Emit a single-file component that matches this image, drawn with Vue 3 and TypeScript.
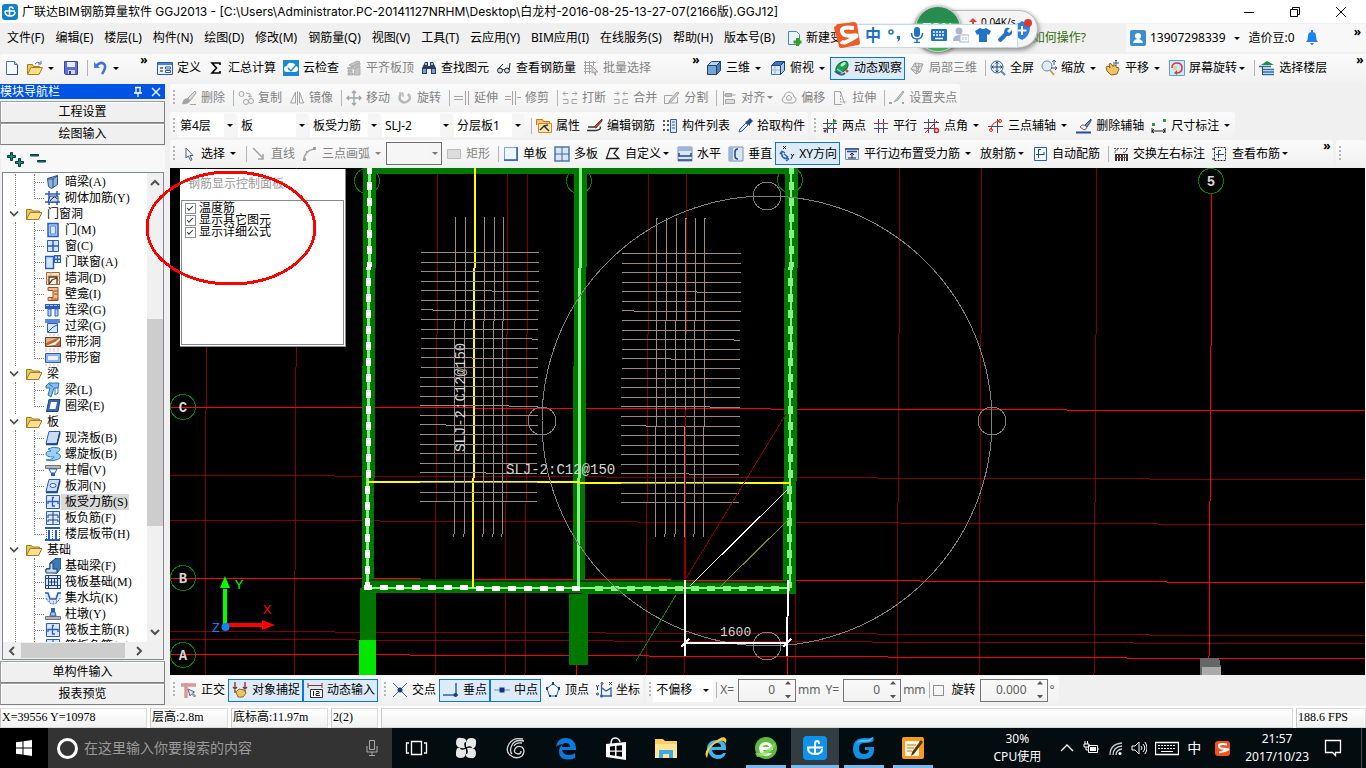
<script setup lang="ts">
import { h, ref } from 'vue'

interface Item {
  kind?: 'sep' | 'handle' | 'combo' | 'more' | 'space'
  icon?: string
  label?: string
  off?: boolean
  on?: boolean
  arrow?: 'split' | 'menu'
  size?: string
}

const g = '#a3a3a3'
const b = '#2b5fb4'

const icons: Record<string, string> = {
  new: `<path d="M2.500 1.500h8l3 3v10h-11z" fill="#f6faff" stroke="#50719f"/><path d="M10.500 1.500v3h3" fill="#c9daf0" stroke="#50719f"/><path d="M13.500 5v9.500h-10" fill="none" stroke="#2f4d7c"/>`,
  open: `<path d="M0.500 14V4.500h5l1 2h6V8" fill="#f0c75a" stroke="#a77f22"/><path d="M0.500 14.500L4 7.500h11.500l-3.500 7z" fill="#ffdf85" stroke="#a77f22"/><path d="M8 4q2-3 5-1m1-2v3h-3" fill="none" stroke="#4e6f8c"/>`,
  save: `<path d="M1.500 1.500h13v13h-12l-1-1z" fill="#5c6fd8" stroke="#37459b"/><path d="M4 2h8v5H4z" fill="#e9eeff"/><path d="M5 10h7v4H5z" fill="#cfd6ee"/><path d="M6 11h2v3H6z" fill="#333f86"/>`,
  undo: `<path d="M2 2v6h6z" fill="#3e86dd"/><path d="M4 6q5-5 8-2t-2 10" fill="none" stroke="#3e74d0" stroke-width="2.500"/>`,
  define: `<path d="M0.500 2.500h15v12H0.500z" fill="#eaf3ff" stroke="#2a5aa8"/><path d="M1 3h14v2H1z" fill="#4b83d6"/><path d="M3 8h3M3 11h3" stroke="#111"/><path d="M8.500 7h5v2h-5zM8.500 10.500h5v2h-5z" fill="#fff" stroke="#2a5aa8"/>`,
  sum: `<path d="M12 5V3H4l4.500 5L4 13h8v-2" fill="none" stroke="#000" stroke-width="1.600"/>`,
  cloud: `<path d="M0 0h16v16H0z" fill="#1b8ad6"/><path d="M4 12q-3 0-3-3t3-3q1-4 5-3t3 3q3 0 3 3t-3 3z" fill="#fff"/><path d="M5 8l3 3 5-6" stroke="#1b8ad6" stroke-width="1.500" fill="none"/>`,
  flat: `<path d="M3 5l8-4 3 1-8 5zM1 8l5-1 8-4v2l-6 4H2zM2 10h4v2H2zM2 13h5v2H2zM9 9l5-3v9H8z" fill="#c4c4c4" stroke="${g}" stroke-width=".8"/>`,
  binoc: `<path d="M1 8l3-6h3v4h2V2h3l3 6v6h-5V9H6v5H1z" fill="#2c3f62"/><path d="M2 9h3v4H2zM11 9h3v4h-3z" fill="#7c9fd6"/><path d="M4 3h2v2H4zM10 3h2v2h-2z" fill="#9db8e2"/>`,
  glasses: `<circle cx="4" cy="10.500" r="2.500" fill="#cdd8e4" stroke="#222"/><circle cx="11" cy="10.500" r="2.500" fill="#cdd8e4" stroke="#222"/><path d="M6 10q1.500-1 3 0M2 9l5-5M13 10l1-7" fill="none" stroke="#222"/>`,
  batch: `<path d="M1 2.500h12M1 5.500h8M1 8.500h7M1 11.500h7M2.500 1v13M6.500 1v13M10.500 1v5" stroke="${g}" fill="none"/><path d="M9 6l6 6h-3l1 3h-1l-1-3-2 1z" fill="#ddd" stroke="${g}"/>`,
  cube: `<path d="M1.500 5.500h9v9h-9z" fill="#77a5d9" stroke="#24466e"/><path d="M1.500 5.500l4-4h9l-4 4z" fill="#b7d4f2" stroke="#24466e"/><path d="M10.500 5.500l4-4v9l-4 4z" fill="#4b7cb6" stroke="#24466e"/>`,
  top: `<path d="M1.500 5.500h9v9h-9z" fill="#dbe9f8" stroke="#55749b"/><path d="M1.500 5.500l4-4h9l-4 4z" fill="#3878c4" stroke="#24466e"/><path d="M10.500 5.500l4-4v9l-4 4z" fill="#abc8e8" stroke="#24466e"/><path d="M5 6v8M2 10h8" stroke="#9db8d6"/>`,
  orbit: `<path d="M1 11q6 6 10 2" fill="none" stroke="#3f5f8d" stroke-width="2"/><ellipse cx="8" cy="7" rx="7" ry="4.500" transform="rotate(-40 8 7)" fill="#22a04e" stroke="#13683a"/><ellipse cx="9.500" cy="4.500" rx="3" ry="1.500" transform="rotate(-35 9 5)" fill="#b8f5c4"/><path d="M3 9l6 4" stroke="#7ad6f0" stroke-width="1.500"/><circle cx="13" cy="11" r="1.500" fill="#d2403b"/>`,
  local3d: `<path d="M2 9l4-6 8 1-3 8zM2 9l5 5 4-2M6 3l2 6-1 5M8 9l6-5" fill="#e3e3e3" stroke="${g}"/><path d="M4 6l7 1M10 3.500l-1 8" fill="none" stroke="${g}"/>`,
  full: `<circle cx="7" cy="7" r="6" fill="#e1efff" stroke="#385d94"/><path d="M7 2v10M2 7h10M5.500 3.500L7 2l1.500 1.500M5.500 10.500L7 12l1.500-1.500M3.500 5.500L2 7l1.500 1.500M10.500 5.500L12 7l-1.500 1.500" fill="none" stroke="#204277"/><path d="M11 11l4 4" stroke="#70819c" stroke-width="2"/>`,
  zoom: `<circle cx="6" cy="6" r="5" fill="#dceeff" stroke="#6f8aa9"/><path d="M9 10l4 5" stroke="#d39a4a" stroke-width="2"/><path d="M13 0v5m-2-3l2-2 2 2M10 8h6m-2-1.500L16 8l-2 2" fill="none" stroke="#2f5b94"/>`,
  pan: `<path d="M1 7l2-1 2 2-1-4 2-.5 2 3V5l2 0 2 3 1-1 1 2-2 5-6 1-4-4z" fill="#f0c363" stroke="#8c6422"/><path d="M11 0v6M8 3h6M10 1l1-1 1 1" stroke="#345d91" fill="none"/>`,
  rotscr: `<path d="M0.500 0.500h15v15H0.500z" fill="#cfe9fb" stroke="#5ba3d6"/><path d="M3 8q0-5 5-5t5 5-6 5" fill="none" stroke="#d63c3c" stroke-width="1.600"/><path d="M8 10l-3 3 3 2z" fill="#d63c3c"/><circle cx="6" cy="8" r="2" fill="#f4cd62"/>`,
  floors: `<path d="M2 5l6-4 7 4z" fill="#1e8a4c"/><path d="M0 6.500h12M4 9.500h11M4 12h11M4 14.500h11" stroke="#2a6ba8" stroke-width="1.400"/><path d="M3.500 6v9" fill="none" stroke="#205a36"/>`,
  del: `<path d="M14 1L7 8l2 3 6-8z" fill="#ddd" stroke="${g}"/><path d="M7 8q-5 0-6 6 6 1 8-3z" fill="${g}"/><path d="M9 14.500h6" stroke="${g}"/>`,
  copy: `<circle cx="3.500" cy="4" r="2.500" fill="none" stroke="${g}"/><circle cx="8" cy="12" r="2.500" fill="none" stroke="${g}"/><circle cx="13" cy="11" r="2.500" fill="none" stroke="${g}"/><path d="M8 3l4 1v3m-2-1l2 1 2-1" fill="none" stroke="${g}"/>`,
  mirror: `<path d="M6.500 2v11H1.500zM10.500 2v11h4z" fill="none" stroke="${g}"/><path d="M8.500 1v14" stroke="${g}"/>`,
  move: `<path d="M8 1v14M1 8h14M6 3l2-2 2 2M6 13l2 2 2-2M3 6L1 8l2 2M13 6l2 2-2 2" fill="none" stroke="${g}" stroke-width="1.400"/>`,
  rotate: `<path d="M4 4q-3 4 0 7t7 0 0-7" fill="none" stroke="#b8b8b8" stroke-width="2.500"/><path d="M2 3h4v4" fill="none" stroke="${g}"/>`,
  extend: `<path d="M0 6.500h9M0 9.500h9M11.500 1v14M14.500 1v14" stroke="${g}"/>`,
  trim: `<path d="M0 6.500h6M0 9.500h6M7.500 1v14M10.500 1v14M12 7.500h4" stroke="${g}"/>`,
  brk: `<path d="M1 3.500h5m-3-2L1 3.500l2 2M10 3.500h5m-2-2l2 2-2 2" fill="none" stroke="${g}"/><path d="M1 9.500h5v4H1M15 9.500h-5v4h5" fill="none" stroke="${g}"/>`,
  join: `<path d="M1 3.500h5m-2-2l2 2-2 2M15 3.500h-5m2-2l-2 2 2 2" fill="none" stroke="${g}"/><path d="M1 9.500h5v4H1M15 9.500h-5v4h5" fill="none" stroke="${g}"/>`,
  split: `<path d="M0.500 13V5.500h8M13.500 7v6H6M0 13.500h4" fill="none" stroke="${g}"/><path d="M13 2l2 1-7 8-4 3 2-4z" fill="#ccc" stroke="${g}"/>`,
  align: `<path d="M2.500 1v14M4.500 3.500h6v3h-6zM4.500 9.500h9v4h-9z" fill="#ddd" stroke="${g}"/><path d="M2.500 5h12" stroke="${g}"/>`,
  offset: `<path d="M4 13q-3-1-3-4 1-2 2-2 1-5 5-5t5 5q3 1 2 3-1 3-3 3z" fill="none" stroke="${g}"/><path d="M6 10q-2-3 2-5 4 2 2 5z" fill="none" stroke="${g}"/>`,
  stretch: `<path d="M10 14.500H2.500v-13h6l4 12" fill="none" stroke="${g}"/><path d="M8.500 2v10h6" fill="none" stroke="${g}" stroke-dasharray="2 1"/>`,
  grip: `<path d="M0 13h3M13 13h2" stroke="${g}" stroke-width="2"/><path d="M14 1L5 12l4-2 6-8z" fill="#ccc" stroke="${g}"/>`,
  prop: `<path d="M0.500 7V1.500h6l1 2h6v3" fill="#f7c668" stroke="#b77a20"/><path d="M2.500 5.500h13v9h-13z" fill="#ffe7b0" stroke="#d08b28"/><path d="M4 12l4-4 5 5M8 8l4-1" fill="none" stroke="#333" stroke-width="1.500"/>`,
  edit: `<path d="M15 1L7 9l2 1 6-7z" fill="#c34a38" stroke="#6a2c22"/><path d="M1 9h6M0 12.500h9q6-1 4-4" fill="none" stroke="#333" stroke-width="1.300"/>`,
  list: `<path d="M8.500 1.500h6v13h-6z" fill="#dcebff" stroke="#335c9b"/><path d="M10 4h3M10 7h3M10 10h3" stroke="#335c9b"/><path d="M1 3h2M5 3h2M1 7h2M5 7h2M1 12h2M5 12h2" stroke="#222" stroke-width="1.500"/>`,
  pick: `<path d="M2 14l1-3 6-6 2 2-6 6z" fill="#dcecff" stroke="#31599a"/><path d="M8 4l2-1 3-3 3 3-3 3 0 2z" fill="#244a90"/>`,
  twopt: `<path d="M5.500 1v14M11.500 1v14M1 5.500h14M1 10.500h14" stroke="#3d4a66"/><path d="M2 14L14 2" stroke="#2d9a3a"/><circle cx="3" cy="13" r="1.500" fill="#b32020"/><circle cx="13" cy="3" r="1.500" fill="#2d9a3a"/>`,
  para: `<path d="M5.500 1v14M10.500 1v14" stroke="#3d4a66"/><path d="M1 10.500h14" stroke="#5a3d80"/><path d="M1 5.500h14" stroke="#b03a3a"/>`,
  ptang: `<path d="M4.500 1v14M10.500 1v14M0 4.500h15M0 10.500h12" stroke="#3d4a80"/><path d="M1 15L13 3" stroke="#d22"/><circle cx="12.500" cy="12.500" r="2" fill="none" stroke="#d22" stroke-width="1.500"/>`,
  threept: `<path d="M9.500 1v14M0 8.500h15" stroke="#3d4a66"/><path d="M3 12q0-8 9-9" fill="none" stroke="#d22"/><circle cx="3" cy="12" r="1.500" fill="none" stroke="#d22"/><circle cx="12" cy="3" r="1.500" fill="none" stroke="#d22"/>`,
  delax: `<path d="M15 1L9 7l2 2 4-6z" fill="#6d8fce" stroke="#2b4a86"/><path d="M8 7q-2-1-4 2l4 3q3-1 3-3z" fill="#f2f0ee" stroke="#84584a"/><path d="M0 14.500h15" stroke="#2849a4" stroke-width="2"/>`,
  dim: `<path d="M1 13h13M1 10v5M14 10v5M3 11l-2 2 2 2M12 11l2 2-2 2" fill="none" stroke="#222"/><path d="M1 5h3v3H1zM12 1h3v3h-3z" fill="#2d9a4a"/>`,
  cursor: `<path d="M5 2v10l2.500-2 2 4.500 1.500-.6-2-4.400h3z" fill="#fff" stroke="#4d5b78"/>`,
  line: `<path d="M2 2l10 10M12 8v5H7" fill="none" stroke="${g}" stroke-width="1.500"/>`,
  arc: `<path d="M2 14q0-9 10-11" fill="none" stroke="${g}" stroke-width="1.500"/><path d="M11 1h3v3h-3zM1 12h3v3H1zM4 5h2v2H4z" fill="${g}"/>`,
  rect: `<path d="M1.500 3.500h13v9h-13z" fill="#ddd" stroke="#bbb"/>`,
  single: `<path d="M1.500 1.500h13v13h-13z" fill="#eff6ff" stroke="#79a3d9"/><path d="M1 14h14M14 1v13" stroke="#2a5cae" stroke-width="1.500"/>`,
  multi: `<path d="M1 1h14v14H1z" fill="#d8e6f6" stroke="#4b76ab" stroke-width="1.500"/><path d="M8 1v14M1 8h14" stroke="#3e6aa1"/>`,
  custom: `<path d="M1.500 12.500L5 2.500h8l-4 5 5 5z" fill="#fff" stroke="#222" stroke-width="1.300"/>`,
  hori: `<path d="M1 1h14v14H1z" fill="#d9e6f5" stroke="#7796bd"/><path d="M1 1h14v4H1z" fill="#9bb5d6"/><path d="M2 7v3h12V7M1 14h14" fill="none" stroke="#25467e" stroke-width="1.500"/>`,
  vert: `<path d="M1 1h14v14H1z" fill="#d9e6f5" stroke="#7796bd"/><path d="M1 1h4v14H1z" fill="#9bb5d6"/><path d="M10 3q-3 0-3 3v4q0 3 3 3" fill="none" stroke="#25467e" stroke-width="1.500"/>`,
  xy: `<path d="M3 5q-2 8 7 8M3 5l-2 3M3 5l3 2M10 13l-3-2M10 13l-3 2M5 8l4 3" fill="none" stroke="#2c66b5" stroke-width="1.500"/><path d="M4 0l3 3M7 0L4 3M12 8l1.500 2L15 8M13.500 10l-1.500 3" fill="none" stroke="#111"/>`,
  paredge: `<path d="M1.500 2.500h13v11h-13z" fill="#dfe9f7" stroke="#7090bd"/><path d="M1 3h14M3 5.500h10" stroke="#2a4b8c" stroke-width="1.500"/><path d="M8 7v5M6 9l2-2 2 2M4 12h8" fill="none" stroke="#222"/>`,
  auto: `<path d="M2.500 1.500h12v13h-12z" fill="#f4f8ff" stroke="${b}"/><path d="M9 3.500H6.500V12M4 8.500h8M12 6v3" fill="none" stroke="#26478c"/>`,
  swap: `<path d="M1 2.500h14" stroke="#666" stroke-dasharray="2 1"/><path d="M2 7q0-4 3-3M10 6q2 2 4-3" fill="none" stroke="#666"/><path d="M2 8h13v7H2z" fill="#333"/><path d="M4.500 9v6M7.500 9v6M10.500 9v6M12.500 9v6" stroke="#fff"/><path d="M3 11.500h11" stroke="#a33"/>`,
  viewbar: `<path d="M2.500 1.500h11v13h-11z" fill="none" stroke="#222" stroke-dasharray="2 1"/><path d="M9 4.500H6.500V12M4 8.500h8" fill="none" stroke="#26478c"/><path d="M0 3h3M0 13h3" stroke="#222"/>`,
  ortho: `<path d="M0 3h15M5 1v15" stroke="#d99a9a" stroke-width="3.500"/><path d="M7 7l2 7 1.500-2 3 3 1-1-3-3 2-1z" fill="#dbe4ee" stroke="#5a6b80"/>`,
  snap: `<path d="M3 0v11M13 0v11M1 5l2 2 2-2M11 5l2 2 2-2" fill="none" stroke="#8c3434" stroke-width="1.400"/><path d="M4 10l3-3 5 1 2 3-3 4H6z" fill="#eac761" stroke="#8f6b26"/>`,
  dynin: `<path d="M1 1v5M15 1v5M1 3.500h14" stroke="#8c3434"/><path d="M3.500 7.500h12v8h-12z" fill="#fff" stroke="#333"/><path d="M6.500 9v5M9 9.500h3v2H9v2h4" fill="none" stroke="#222"/>`,
  cross: `<path d="M1 1l14 14M15 1L1 15" stroke="#2a63b0"/><circle cx="8" cy="8" r="2.500" fill="#15417f"/>`,
  perp: `<path d="M13 1v12M0 13h15" stroke="#2a63b0" stroke-width="1.500"/><circle cx="12.500" cy="13" r="2" fill="#15417f"/>`,
  mid: `<path d="M0 8h16" stroke="#5f8dca"/><path d="M5.500 5.500h5v5h-5z" fill="#15317f"/>`,
  vertex: `<path d="M8 1.500l6 5-2.500 7.500h-7L2 6.500z" fill="#f4f8ff" stroke="#2a63b0"/><path d="M7 0h2v3H7zM1 5h2v3H1zM13 5h2v3h-2zM4 13h2v2H4zM10 13h2v2h-2z" fill="#15417f"/>`,
  coord: `<path d="M5.500 3v11H16M6 6l4 3 5-3v8" fill="none" stroke="#2a63b0" stroke-width="1.300"/><circle cx="5.500" cy="14" r="1.500" fill="#2a63b0"/><path d="M0 3l1.500 2L3 3M1.500 5v3M13 0l3 3M16 0l-3 3" fill="none" stroke="#333"/><circle cx="6" cy="1.500" r="1" fill="none" stroke="#333"/><circle cx="1.500" cy="12" r="1" fill="none" stroke="#333"/>`,
  doc: `<path d="M2.500 1.500h8l3 3v10h-11z" fill="#eaf5ff" stroke="#4886bd"/><path d="M11.500 8v8M7.500 12h8" stroke="#34a01e" stroke-width="3"/>`,
  user: `<path d="M0 2q0-2 2-2h12q2 0 2 2v12q0 2-2 2H2q-2 0-2-2z" fill="#3b8ecf"/><circle cx="8" cy="6" r="3" fill="#fff"/><path d="M3 13q1-4 5-4t5 4z" fill="#fff"/>`,
  bell: `<path d="M2 12q2-2 2-6 0-4 4-4t4 4q0 4 2 6z" fill="#1d83f0"/><path d="M6 13h4l-2 2.500zM7 0h2v3H7z" fill="#1d83f0"/>`,
  folder: `<path d="M0.500 13.500V3.500h5l1 1.500h7v3" fill="#efc458" stroke="#9d7a2a"/><path d="M0.500 13.500L4 6.500h12l-3.500 7z" fill="#ffe08c" stroke="#9d7a2a"/>`,
  beamA: `<path d="M2.500 4.500l10-3v9l-6 4-3-2z" fill="#8fb2de" stroke="#2a4d82"/><path d="M3 5h5v9M8 5l4-3" fill="none" stroke="#2a4d82"/>`,
  mesh: `<path d="M0 4h15M0 12h15M4 1v14M12 1v14" stroke="#2a5cc0" stroke-width="1.500"/><path d="M5 6h8v6H3z" fill="#c5dafa" stroke="#1e3f80"/><path d="M5 11q5-7 7-2" fill="none" stroke="#222"/>`,
  door: `<path d="M3 1.500h10v13H3z" fill="#a9caff" stroke="#2a5cc0" stroke-width="1.500"/><path d="M5.500 4h5v8h-5z" fill="#d8e8ff" stroke="#5d8bdc"/>`,
  window: `<path d="M2.500 2.500h11v11h-11z" fill="#d3e5ff" stroke="#2a5cc0"/><path d="M8 2v12M2 8h12" stroke="#2a5cc0" stroke-width="1.500"/>`,
  doorwin: `<path d="M0.500 2.500h8v12h-8z" fill="#d3e5ff" stroke="#2a5cc0" stroke-width="1.500"/><path d="M9 1h7v8H9z" fill="#2a5cc0"/><path d="M10 2.500h2v2h-2zM13 2.500h2v2h-2zM10 6h2v2h-2zM13 6h2v2h-2z" fill="#d3e5ff"/>`,
  wallhole: `<path d="M1.500 2.500h13v12h-13z" fill="#ffe4ce" stroke="#b3612c"/><path d="M1 6h14M1 10h14M6 2v4M11 6v4" stroke="#d99870"/><path d="M4 14V7h8v7M4 14l3-4 5-2" fill="#fff" stroke="#5a3216" stroke-width="1.300"/>`,
  niche: `<path d="M3 1.500h10v13H3v-3h5v-7H3z" fill="#f6bb8e" stroke="#9e4f1c"/><path d="M9 5h4M9 8h4M6 13h7" stroke="#9e4f1c"/>`,
  link: `<path d="M0 2h15v5H0z" fill="#2a5cc0"/><path d="M1 3.500h13" stroke="#a9c8f6" stroke-dasharray="3 1"/><path d="M3 7h3v7H3zM10 7h3v7h-3z" fill="#b9d3fa" stroke="#2a5cc0"/>`,
  lintel: `<path d="M0 1h15v4H0z" fill="#5a8ae0"/><path d="M2.500 5.500h10v9h-10z" fill="#d7e7ff" stroke="#2a5cc0"/><path d="M3 14l5-5 4-2" fill="none" stroke="#2a5cc0"/>`,
  striphole: `<path d="M0.500 3.500h15v9H0.500z" fill="#b56a3c" stroke="#7b3c18"/><path d="M1 12L10 8l5-4v2l-5 5z" fill="#fff0e4"/><path d="M1 4h11L1 9z" fill="#e5b392"/><path d="M0 1h16M0 15h16" stroke="#f0b0a0" stroke-dasharray="2 2"/>`,
  stripwin: `<path d="M0.500 3.500h15v9H0.500z" fill="#8db4f0" stroke="#2a5cc0"/><path d="M3 6h10v4H3z" fill="#e8f2ff"/><path d="M0 1h16M0 15h16" stroke="#f0b0a0" stroke-dasharray="2 2"/>`,
  beamL: `<path d="M1 4l3-3h10l-1 5H9l-3 9-3-2 2-7H1z" fill="#86bdee" stroke="#2474b8"/><path d="M10 6v7l3-2V5M4 2l4 3" fill="none" stroke="#2474b8"/>`,
  ring: `<path d="M4 1.500h11L13 13.500H1.500z" fill="#3869b8" stroke="#1e417f"/><path d="M6 4h6l-1.500 7h-6z" fill="#fff"/>`,
  slab: `<path d="M4 1.500h11l-3 12H1z" fill="#c9dcf8" stroke="#2a5cc0"/><path d="M1 14.500h11l3-12" fill="none" stroke="#1e417f" stroke-width="1.500"/>`,
  spiral: `<path d="M3 3q5-3 11-1 3 2-3 5 6 1 4 5-5 4-14 2 8-1 8-3-8 0-8-3t5-3q-2-2-3-2z" fill="#9bd0f6" stroke="#2c7fc0"/>`,
  cap: `<path d="M0.500 3.500h15v3h-15z" fill="#b7b7b7" stroke="#777"/><path d="M4 7l2 4h4l2-4z" fill="#fff" stroke="#2a5cc0"/><path d="M6 11h4v3H6z" fill="#2a5cc0"/>`,
  slabhole: `<path d="M4 1.500h11l-3 12H1z" fill="#c9dcf8" stroke="#2a5cc0"/><path d="M1 14.500h11l3-12" fill="none" stroke="#1e417f" stroke-width="1.500"/><ellipse cx="8" cy="7.500" rx="3" ry="2" fill="#fff" stroke="#2a5cc0"/>`,
  rebar: `<path d="M1.500 1.500h13v13h-13z" fill="#dce9fd" stroke="#2a5cc0"/><path d="M9 3.500H7.500V12H10M3 10V7.500h10V10" fill="none" stroke="#2a5cc0" stroke-width="1.300"/>`,
  negbar: `<path d="M1.500 1.500h13v13h-13z" fill="#dce9fd" stroke="#2a5cc0"/><path d="M8 2v12M3 5h10M3 10h10M3 5v3M13 5v3M3 10v2M13 10v2" fill="none" stroke="#1e417f"/>`,
  strip: `<path d="M0 2h15M0 14h15" stroke="#2a5cc0" stroke-width="2"/><path d="M4 4v9M11 4v9" stroke="#2a5cc0" stroke-width="2"/><path d="M7.500 4v9M1.500 4v9M14.500 4v9" stroke="#2a5cc0" stroke-dasharray="1 1"/>`,
  fbeam: `<path d="M1 14v-3l4-1V5l6-5h5v10l-4 5z" fill="#3a78bd" stroke="#1e4273"/><path d="M1 11h4V5h3v6h4v4H1z" fill="#bfdcf8" stroke="#1e4273"/>`,
  raft: `<path d="M0.500 1.500h15v13H0.500z" fill="#dce9fd" stroke="#1e417f"/><path d="M3.500 1v14M12.500 1v14M0 4.500h16M0 11.500h16M6.500 4v8M9.500 4v8M3 8h10" stroke="#1e417f"/>`,
  pit: `<path d="M0 2h4l2 5h4l2-5h4v5q-3 8-8 7T0 7z" fill="#dce9fd"/><path d="M0 3h3l2 6h6l2-6h3" fill="none" stroke="#2a5cc0" stroke-width="1.500"/><path d="M1 8q3 6 7 6t7-6M4 11h1M8 12h1M11 11h1" fill="none" stroke="#2a5cc0" stroke-dasharray="2 1"/>`,
  pier: `<path d="M0.500 10.500h15v3h-15z" fill="#b7b7b7" stroke="#777"/><path d="M5 10l1-4h4l1 4z" fill="#9dc0f5" stroke="#2a5cc0"/><path d="M6 2h4v4H6z" fill="#2a5cc0"/>`,
}

const caret = () => h('svg', { class: 'caret', viewBox: '0 0 6 3' }, [h('path', { d: 'M0 0h6L3 3z', fill: 'currentColor' })])

const Strip = (props: { items: Item[] }) =>
  props.items.map((it) => {
    if (it.kind === 'sep') return h('i', { class: 't-sep' })
    if (it.kind === 'handle') return h('i', { class: 't-handle' })
    if (it.kind === 'space') return h('i', { class: 't-space' })
    if (it.kind === 'more') return h('button', { class: 't-more', 'aria-label': '更多' }, '»')
    if (it.kind === 'combo')
      return h('span', { class: ['t-combo', it.size, { framed: it.off }] }, [
        h('select', { 'aria-label': it.label || '数值', disabled: it.off }, [h('option', it.label)]),
        h('span', { class: 't-drop' }, [caret()]),
      ])
    return h('button', { class: ['t-btn', { off: it.off, on: it.on }] }, [
      it.icon ? h('svg', { class: 't-ico', viewBox: '0 0 16 16', innerHTML: icons[it.icon] }) : null,
      it.label ? h('span', { class: 't-label' }, it.label) : null,
      it.arrow ? h('span', { class: ['t-arrow', it.arrow] }, [caret()]) : null,
    ])
  })
Strip.props = ['items']

const sep: Item = { kind: 'sep' }
const handle: Item = { kind: 'handle' }
const more: Item = { kind: 'more' }
const space: Item = { kind: 'space' }
const it = (icon: string, label: string, rest: Partial<Item> = {}): Item => ({ icon, label, ...rest })
const off = (icon: string, label: string, rest: Partial<Item> = {}): Item => ({ icon, label, off: true, ...rest })

const menus = ['文件(F)', '编辑(E)', '楼层(L)', '构件(N)', '绘图(D)', '修改(M)', '钢筋量(Q)', '视图(V)', '工具(T)', '云应用(Y)', 'BIM应用(I)', '在线服务(S)', '帮助(H)', '版本号(B)']

const fileBar: Item[] = [it('new', ''), it('open', '', { arrow: 'split' }), it('save', ''), sep, it('undo', '', { arrow: 'split' }), space, more]
const calcBar: Item[] = [
  it('define', '定义'), it('sum', '汇总计算'), it('cloud', '云检查'), off('flat', '平齐板顶'), it('binoc', '查找图元'),
  it('glasses', '查看钢筋量'), off('batch', '批量选择'), space, more,
]
const viewBar: Item[] = [
  it('cube', '三维', { arrow: 'split' }), it('top', '俯视', { arrow: 'split' }), it('orbit', '动态观察', { on: true }), off('local3d', '局部三维'), sep,
  it('full', '全屏'), it('zoom', '缩放', { arrow: 'split' }), it('pan', '平移', { arrow: 'split' }), it('rotscr', '屏幕旋转', { arrow: 'menu' }), sep,
  it('floors', '选择楼层'), space, more,
]
const rows: Item[][][] = [
  [[
    handle, off('del', '删除'), sep, off('copy', '复制'), off('mirror', '镜像'), sep, off('move', '移动'), off('rotate', '旋转'), sep,
    off('extend', '延伸'), off('trim', '修剪'), sep, off('brk', '打断'), off('join', '合并'), off('split', '分割'), sep,
    off('align', '对齐', { arrow: 'menu' }), off('offset', '偏移'), off('stretch', '拉伸'), sep, off('grip', '设置夹点'),
  ]],
  [[
    handle, { kind: 'combo', label: '第4层', size: 'small' }, { kind: 'combo', label: '板' }, { kind: 'combo', label: '板受力筋' },
    { kind: 'combo', label: 'SLJ-2' }, { kind: 'combo', label: '分层板1' }, sep,
    it('prop', '属性'), it('edit', '编辑钢筋'), it('list', '构件列表'), it('pick', '拾取构件'),
  ], [
    handle, it('twopt', '两点'), it('para', '平行'), it('ptang', '点角', { arrow: 'split' }), it('threept', '三点辅轴', { arrow: 'split' }),
    it('delax', '删除辅轴'), it('dim', '尺寸标注', { arrow: 'split' }),
  ]],
  [[
    handle, it('cursor', '选择', { arrow: 'split' }), sep, off('line', '直线'), off('arc', '三点画弧', { arrow: 'split' }),
    { kind: 'combo', label: '', off: true, size: 'small' }, off('rect', '矩形'), sep, it('single', '单板'), it('multi', '多板'),
    it('custom', '自定义', { arrow: 'menu' }), it('hori', '水平'), it('vert', '垂直'), it('xy', 'XY方向', { on: true }),
    it('paredge', '平行边布置受力筋', { arrow: 'split' }), { label: '放射筋', arrow: 'menu' }, it('auto', '自动配筋'), sep,
    it('swap', '交换左右标注'), it('viewbar', '查看布筋', { arrow: 'menu' }), space, more,
  ], [handle, space]],
]
const snapBars: Item[][] = [
  [handle, it('ortho', '正交'), it('snap', '对象捕捉', { on: true }), it('dynin', '动态输入', { on: true })],
  [handle, it('cross', '交点'), it('perp', '垂点', { on: true }), it('mid', '中点', { on: true }), it('vertex', '顶点'), it('coord', '坐标')],
]

interface Node { icon: string; label: string; key?: string; sel?: boolean; last?: boolean }
const n = (icon: string, label: string, key?: string, rest: Partial<Node> = {}): Node => ({ icon, label, key, ...rest })
const tree: { label?: string; kids: Node[] }[] = [
  { kids: [n('beamA', '暗梁', 'A'), n('mesh', '砌体加筋', 'Y', { last: true })] },
  { label: '门窗洞', kids: [
    n('door', '门', 'M'), n('window', '窗', 'C'), n('doorwin', '门联窗', 'A'), n('wallhole', '墙洞', 'D'), n('niche', '壁龛', 'I'),
    n('link', '连梁', 'G'), n('lintel', '过梁', 'G'), n('striphole', '带形洞'), n('stripwin', '带形窗', undefined, { last: true }),
  ] },
  { label: '梁', kids: [n('beamL', '梁', 'L'), n('ring', '圈梁', 'E', { last: true })] },
  { label: '板', kids: [
    n('slab', '现浇板', 'B'), n('spiral', '螺旋板', 'B'), n('cap', '柱帽', 'V'), n('slabhole', '板洞', 'N'),
    n('rebar', '板受力筋', 'S', { sel: true }), n('negbar', '板负筋', 'F'), n('strip', '楼层板带', 'H', { last: true }),
  ] },
  { label: '基础', kids: [
    n('fbeam', '基础梁', 'F'), n('raft', '筏板基础', 'M'), n('pit', '集水坑', 'K'), n('pier', '柱墩', 'Y'), n('rebar', '筏板主筋', 'R'),
    n('negbar', '筏板负筋', 'X'),
  ] },
]

const options = ref([
  { label: '温度筋', checked: true },
  { label: '显示其它图元', checked: true },
  { label: '显示详细公式', checked: true },
])

const darkAxes = [
  [206.5, 168, 205.5, 675], [297, 168, 294.5, 675], [438, 168, 435, 675], [508, 168, 505, 675], [528, 168, 525, 675],
  [649, 168, 646, 675], [687, 168, 684, 675], [796, 590, 795, 675], [900, 168, 897, 675], [982, 168, 979, 675], [1097, 168, 1094, 675],
  [170, 475.4, 1365, 479.8], [170, 520.2, 1365, 524.8], [170, 631.4, 1365, 635.8], [170, 639.3, 1365, 643.9],
]
const redAxes = [
  [170, 407, 1365, 411], [170, 578, 1365, 582.8], [170, 654, 1365, 659], [1212, 194, 1209, 658], [787.5, 656, 787.5, 675], [576.5, 660, 576.5, 675],
]
const mats = [
  { x1: 421, x2: 539, y: 252.5, cols: [455.5, 465.5, 484.5, 494.5, 503.5] },
  { x1: 622, x2: 741, y: 253.5, cols: [657, 666.5, 676.5, 686, 695.5, 705] },
]
const matRows = Array.from({ length: 27 }, (_, i) => i * 9.58)
const bubbles = [
  { x: 183, y: 407, t: 'C' }, { x: 183, y: 578, t: 'B' }, { x: 183, y: 655, t: 'A' }, { x: 1211, y: 181, t: '5' },
  { x: 367, y: 181, t: '' }, { x: 579, y: 181, t: '' }, { x: 790, y: 180, t: '' },
]
const grips = [[767, 196], [767, 646], [542, 421], [992, 421]]
</script>

<template>
  <div class="app">
    <header class="title">
      <svg class="logo" viewBox="0 0 16 16"><rect width="16" height="16" rx="3" fill="#1281c9" /><path d="M11 5q0-2-2-2T7.500 5v7M3 7h10M3 7q0 5 5 5t5-4" fill="none" stroke="#fff" stroke-width="1.500" /></svg>
      <h1>广联达BIM钢筋算量软件 GGJ2013 - [C:\Users\Administrator.PC-20141127NRHM\Desktop\白龙村-2016-08-25-13-27-07(2166版).GGJ12]</h1>
      <div class="winbtns">
        <button aria-label="最小化"><svg viewBox="0 0 12 12"><path d="M1 6.500h10" stroke="#000" /></svg></button>
        <button aria-label="还原"><svg viewBox="0 0 12 12"><path d="M1.500 3.500h7v7h-7zM3.500 3.500v-2h7v7h-2" fill="none" stroke="#000" /></svg></button>
        <button aria-label="关闭"><svg viewBox="0 0 12 12"><path d="M1 1l10 10M11 1L1 11" stroke="#000" /></svg></button>
      </div>
    </header>

    <nav class="menu">
      <div class="menus">
        <button v-for="m in menus" :key="m">{{ m }}</button>
        <button class="newchg"><svg class="i16" viewBox="0 0 16 16" v-html="icons.doc" />新建变更</button>
      </div>
      <a class="help" href="#">如何操作?</a>
      <div class="account">
        <button class="acc"><svg class="i16" viewBox="0 0 16 16" v-html="icons.user" />13907298339<svg class="tri" viewBox="0 0 6 3"><path d="M0 0h6L3 3z" /></svg></button>
        <span>造价豆:0</span>
        <svg class="i16" viewBox="0 0 16 16" v-html="icons.bell" />
        <b class="chev">»</b>
      </div>
    </nav>

    <div class="toolrow first">
      <div class="group file"><Strip :items="fileBar" /></div>
      <div class="group calc"><Strip :items="calcBar" /></div>
      <div class="group view"><Strip :items="viewBar" /></div>
    </div>

    <main class="body">
      <aside class="side">
        <div class="sidehead">
          <span>模块导航栏</span>
          <svg viewBox="0 0 12 12"><path d="M3 1.500h6M4 1v6M8 1v6M2 7h8M6 7v4" fill="none" stroke="#fff" stroke-width="1.300" /></svg>
          <svg viewBox="0 0 12 12"><path d="M2 2l8 8M10 2l-8 8" stroke="#fff" stroke-width="1.200" /></svg>
        </div>
        <button class="tab">工程设置</button>
        <button class="tab">绘图输入</button>
        <div class="sidetools">
          <svg viewBox="0 0 42 20"><g fill="#0c8f8b" stroke="#063c3a"><path d="M3.500 2.500h2v3h3v2h-3v3h-2v-3h-3v-2h3zM11.500 8.500h2v3h3v2h-3v3h-2v-3h-3v-2h3z" /><path d="M23.500 4.500h8v1.500h-8zM30.500 10.500h8v1.500h-8z" /></g></svg>
        </div>
        <div class="treebox">
          <div class="treemain">
            <div class="tree">
              <div v-for="(grp, gi) in tree" :key="gi" class="branch">
                <div v-if="grp.label" class="row parent">
                  <svg class="fold" viewBox="0 0 12 12"><path d="M2 3.500l4 4 4-4" fill="none" stroke="#444" stroke-width="1.600" /></svg>
                  <svg class="i16" viewBox="0 0 16 16" v-html="icons.folder" />
                  <span>{{ grp.label }}</span>
                </div>
                <div class="kids">
                  <div v-for="k in grp.kids" :key="k.label" class="row kid" :class="{ last: k.last }">
                    <i class="stem" />
                    <svg class="i16" viewBox="0 0 16 16" v-html="icons[k.icon]" />
                    <span class="name" :class="{ sel: k.sel }">{{ k.label }}<kbd v-if="k.key">({{ k.key }})</kbd></span>
                  </div>
                </div>
              </div>
            </div>
            <div class="vbar">
              <svg viewBox="0 0 12 12"><path d="M2 8l4-4 4 4" /></svg>
              <div class="track"><i class="before" /><i class="thumb" /><i class="after" /></div>
              <svg viewBox="0 0 12 12"><path d="M2 4l4 4 4-4" /></svg>
            </div>
          </div>
          <div class="hbar">
            <svg viewBox="0 0 12 12"><path d="M8 2L4 6l4 4" /></svg>
            <i class="hthumb" />
            <svg viewBox="0 0 12 12"><path d="M4 2l4 4-4 4" /></svg>
          </div>
        </div>
        <button class="tab">单构件输入</button>
        <button class="tab">报表预览</button>
      </aside>

      <section class="work">
        <div v-for="(row, ri) in rows" :key="ri" class="toolrow">
          <div v-for="(grp, gi) in row" :key="gi" class="group" :class="{ fill: ri === 2 && gi === 0, blank: ri === 2 && gi === 1 }"><Strip :items="grp" /></div>
        </div>

        <div class="canvas">
          <svg class="drawing" viewBox="170 168 1195 507" preserveAspectRatio="xMinYMin slice">
            <g shape-rendering="crispEdges" fill="none">
              <line v-for="(a, i) in darkAxes" :key="'d' + i" :x1="a[0]" :y1="a[1]" :x2="a[2]" :y2="a[3]" stroke="#800000" />
              <line v-for="(a, i) in redAxes" :key="'r' + i" :x1="a[0]" :y1="a[1]" :x2="a[2]" :y2="a[3]" stroke="#f00" />
              <circle v-for="(c, i) in bubbles" :key="'b' + i" :cx="c.x" :cy="c.y" r="12.500" stroke="#008000" />
            </g>
            <g shape-rendering="crispEdges">
              <path d="M363 168h427v6H376v-1h-13z" fill="#007800" />
              <path d="M363 168h13l-2 420h-12z" fill="#007800" />
              <path d="M574 168h13l-2 415h-12z" fill="#007800" />
              <path d="M785 168h13l-2 421h-13z" fill="#007800" />
              <path d="M362 580l434 2v12l-434-1z" fill="#007800" />
              <path d="M368 579l422 2v2l-422-2z" fill="#004400" />
              <path d="M360 588h16v52h-16zM569 594h19v71h-19z" fill="#007800" />
              <path d="M359 640h17v35h-17z" fill="#00e600" />
            </g>
            <g shape-rendering="crispEdges" fill="none" stroke="#84f284">
              <path d="M369.500 168L367.500 588M580.500 168L578.500 588" stroke-width="3" />
              <path d="M791 168L790 588" stroke-width="2" />
              <path d="M368 587.500L790 588.500" stroke-width="2" />
              <path d="M791.500 166L789.500 588" stroke-width="5" stroke-dasharray="8 8" />
              <path d="M595 588.500H790" stroke-width="5" stroke-dasharray="8 8" />
              <path d="M369.500 166L367.500 588" stroke="#fff" stroke-width="5" stroke-dasharray="8 8" />
              <path d="M364 587.500L580 588.500" stroke="#fff" stroke-width="5" stroke-dasharray="8 8" />
            </g>
            <g shape-rendering="crispEdges" stroke="#ff0" stroke-width="2">
              <path d="M475 168L473 588M368 482L790 483" />
            </g>
            <g shape-rendering="crispEdges" stroke="#9a8a80">
              <template v-for="m in mats" :key="m.x1">
                <line v-for="(r, i) in matRows" :key="'h' + i" :x1="m.x1 - i / 26" :x2="m.x2 - i / 13" :y1="m.y + r" :y2="m.y + r + 0.3" />
                <line v-for="c in m.cols" :key="'v' + c" :x1="c" :x2="c - 1.5" :y1="m.y - 35" y2="537" />
              </template>
            </g>
            <path d="M685.500 410V580" stroke="#a00000" shape-rendering="crispEdges" />
            <g fill="none" shape-rendering="crispEdges">
              <circle cx="767" cy="421" r="225" stroke="#808080" />
              <circle v-for="(p, i) in grips" :key="i" :cx="p[0]" :cy="p[1]" r="14" stroke="#808080" />
              <path d="M685 580L786 414" stroke="#800000" />
              <path d="M690 586L788 489" stroke="#fff" />
              <path d="M720 587L789 519" stroke="#8a8a00" />
              <path d="M636 661L676 595" stroke="#008000" />
              <path d="M685 580V656M788 580L787 656M685 643H787M681 647L689 639M783 647L791 639" stroke="#fff" stroke-width="2" />
              <path d="M1200 658h19l2 9v8h-21z" fill="#666" /><path d="M1202 667h19v8h-19z" fill="#aaa" />
            </g>
            <g class="cadtext">
              <text x="506" y="474">SLJ-2:C12@150</text>
              <text transform="translate(465 452) rotate(-90)">SLJ-2:C12@150</text>
              <text class="dim" x="720" y="636">1600</text>
              <text v-for="(c, i) in bubbles" :key="i" class="mark" :x="c.x" :y="c.y + 5">{{ c.t }}</text>
            </g>
            <g>
              <path d="M223 627v-38h4v38z" fill="#0f0" /><path d="M225 576l5 12h-10z" fill="#0f0" />
              <path d="M226 623h37v4h-37z" fill="#f00" /><path d="M275 625l-13-5v10z" fill="#f00" />
              <circle cx="225.500" cy="627" r="4" fill="#0a84ff" />
              <text class="axis" x="239" y="589" fill="#0f0">Y</text>
              <text class="axis" x="267" y="614" fill="#f00">X</text>
              <text class="axis" x="216" y="632" fill="#0a84ff">Z</text>
            </g>
          </svg>

          <section class="panel">
            <h2>钢筋显示控制面板</h2>
            <div class="opts">
              <label v-for="o in options" :key="o.label"><input v-model="o.checked" type="checkbox" />{{ o.label }}</label>
            </div>
          </section>
        </div>

        <div class="toolrow bottom">
          <div v-for="(grp, gi) in snapBars" :key="gi" class="group"><Strip :items="grp" /></div>
          <div class="group">
            <i class="grab" />
            <span class="shift"><select aria-label="偏移方式"><option>不偏移</option></select><svg class="tri" viewBox="0 0 6 3"><path d="M0 0h6L3 3z" /></svg></span>
            <i class="bar" />
            <label for="ox">X=</label>
            <span class="num"><input id="ox" value="0" /><svg viewBox="0 0 6 18"><path d="M0 3.500h6L3 0zM0 14h6l-3 3.500z" /></svg></span>
            <span class="unit">mm</span>
            <label for="oy">Y=</label>
            <span class="num"><input id="oy" value="0" /><svg viewBox="0 0 6 18"><path d="M0 3.500h6L3 0zM0 14h6l-3 3.500z" /></svg></span>
            <span class="unit">mm</span>
            <i class="bar" />
            <label class="rot"><input type="checkbox" />旋转</label>
            <span class="num wide"><input aria-label="旋转角度" value="0.000" /><svg viewBox="0 0 6 18"><path d="M0 3.500h6L3 0zM0 14h6l-3 3.500z" /></svg></span>
            <span class="unit">°</span>
          </div>
        </div>
      </section>
    </main>

    <footer class="status">
      <span class="s1"><tt>X=39556 Y=10978</tt></span>
      <span class="s2">层高<tt>:2.8m</tt></span>
      <span class="s3">底标高<tt>:11.97m</tt></span>
      <span class="s4"><tt>2(2)</tt></span>
      <span class="s5" />
      <span class="s6"><tt>188.6 FPS</tt></span>
    </footer>

    <div class="taskbar">
      <button class="start" aria-label="开始"><svg viewBox="0 0 16 16"><path d="M0 2.300l6.500-.9v6.100H0zM7.500 1.200L16 0v7.500H7.500zM0 8.500h6.500v6.100L0 13.700zM7.500 8.500H16V16l-8.500-1.200z" fill="#fff" /></svg></button>
      <label class="search">
        <i class="cortana" />
        <input placeholder="在这里输入你要搜索的内容" aria-label="搜索" />
        <svg viewBox="0 0 12 18"><path d="M3.500 1.500h5v9h-5zM1 7v6h10V7M6 13v3M3 16.500h6" fill="none" stroke="#aaa" /></svg>
      </label>
      <div class="apps">
        <button aria-label="任务视图"><svg viewBox="0 0 24 24"><path d="M7.500 5.500h10v13h-10zM5 7H2.500v10H5M20 7h2.500v10H20" fill="none" stroke="#fff" stroke-width="1.300" /></svg></button>
        <button aria-label="风扇"><svg viewBox="0 0 24 24"><g fill="#e8e8e8"><path d="M11 12Q2 13 2 7t5-5q6 0 5 4-3 0-1 6z" /><path d="M12 11Q11 2 17 2t5 5q0 6-4 5 0-3-6-1z" /><path d="M13 12q9-1 9 5t-5 5q-6 0-5-4 3 0 1-6z" /><path d="M12 13q1 9-5 9t-5-5q0-6 4-5 0 3 6 1z" /></g></svg></button>
        <button aria-label="旋流"><svg viewBox="0 0 24 24"><path d="M19 3Q9 1 5 8t1 11q6 5 12 1 4-5 0-9-5-2-7 2t3 5q3 0 3-3M20 5Q11 3 8 9t0 9M18 7q-6-1-8 3" fill="none" stroke="#d8d8d8" stroke-width="1.300" /></svg></button>
        <button aria-label="Edge"><svg viewBox="0 0 24 24"><path d="M2 11Q3 2 12 2t10 10v2H8q1 5 7 5 4 0 6-2v5q-3 1.500-7 1.500-9 0-9-8Q5 10 10 8q-5 0-8 3zM8 11h8q0-4-4-4t-4 4z" fill="#0a7ae0" /></svg></button>
        <button aria-label="应用商店"><svg viewBox="0 0 24 24"><path d="M2 8l20-2v18L2 21z" fill="#fff" /><path d="M7 8q0-6 4-6t5 4" fill="none" stroke="#fff" stroke-width="1.500" /><path d="M6 10.500l5-.5v4.500H6zM12.500 9.800l5.500-.5v5.200h-5.500zM6 15.800h5v4L6 19zM12.500 15.800H18v5l-5.500-.8z" fill="#04090b" /></svg></button>
        <button aria-label="资源管理器"><svg viewBox="0 0 24 24"><path d="M1 3h8l2 2h12v17H1z" fill="#f7cf62" /><path d="M1 8h22v14H1z" fill="#ffe594" /><path d="M5 22v-8h14v8h-4v-4H9v4z" fill="#3ea8e8" /></svg></button>
        <button aria-label="Internet Explorer"><svg viewBox="0 0 24 24"><path d="M3 12q1-8 10-8t9 8v2H8q1 5 6 5 4 0 5-2h3q-2 6-9 6T3 12zM8 11h9q0-4-4-4t-5 4z" fill="#3fb2f0" /><path d="M3 22q-5-6 6-15T22 3q1 2-1 5 0-4-5-3Q5 10 4 18q-.5 2-1 4z" fill="#f6cd37" /></svg></button>
        <button class="run" aria-label="360浏览器"><svg viewBox="0 0 24 24"><circle cx="12" cy="12" r="11" fill="#5ebc3c" /><path d="M5 12q1-6 7-6t7 6v2H9q1 3 4 3h5q-2 3-6 3-6 0-7-8zM9 11h6q0-2-3-2t-3 2z" fill="#fff" /><path d="M1 17q8 2 21-11-4 14-19 15z" fill="#8fe05f" opacity=".8" /></svg></button>
        <button class="run active" aria-label="GGJ"><svg viewBox="0 0 24 24"><rect x="0" y="0" width="24" height="24" rx="4" fill="#0f92ec" /><path d="M16 8q0-3-2-3t-2 3v10M4 11.500h16M5 12q0 6 7 6t7-5" fill="none" stroke="#fff" stroke-width="2" /></svg></button>
        <button class="run" aria-label="广联达"><svg viewBox="0 0 24 24"><path d="M21 1q-3 2-8 1Q1 2 1 13t11 10q11 0 10-12h-9v3h4q0 4-5 4t-5-6q0-5 6-5 4 0 7-1 3-2 1-5z" fill="#1191e4" /><path d="M4 8q3-5 9-4 5 0 8-3-1 5-8 5-6-1-9 2z" fill="#4cc3ff" /></svg></button>
        <button class="run" aria-label="便笺"><svg viewBox="0 0 24 24"><rect x="1" y="1" width="22" height="22" rx="2" fill="#f79c1d" /><path d="M4 5h14v15H4z" fill="#fff5da" /><path d="M6 9h9M6 12h7M6 15h5" stroke="#ad7b2b" /><path d="M20 4l-9 12-1 4 3-2 9-12z" fill="#5a3410" /></svg></button>
      </div>
      <div class="cpu">30%<br />CPU使用</div>
      <div class="tray">
        <svg viewBox="0 0 16 16"><path d="M2 11l6-6 6 6" fill="none" stroke="#fff" stroke-width="1.400" /></svg>
        <svg viewBox="0 0 16 16"><path d="M5.500 5.500h9v7h-9zM15 8v2M2 1v3M4.500 1v3M1 4h5v3H1zM3 7v3h2" fill="none" stroke="#fff" /><path d="M7 7h6v4H7z" fill="#fff" /></svg>
        <svg viewBox="0 0 16 16"><g fill="none" stroke="#ccc"><path d="M3 15Q3 4 15 3M6 15Q6 7 15 6M9 15q0-5 6-6" stroke-width="1.300" /></g><circle cx="13" cy="13.500" r="1.600" fill="#fff" /></svg>
        <svg viewBox="0 0 16 16"><path d="M1 6h3l4-4v12l-4-4H1zM10 6q2 2 0 4M12 4q3.500 4 0 8M14 2q4 6 0 12" fill="none" stroke="#fff" /></svg>
        <svg class="wide" viewBox="0 0 24 16"><path d="M.5 2.500h23v12H.5z" fill="none" stroke="#fff" stroke-width="1.300" /><path d="M3 5.500h18M3 8.500h18" stroke="#fff" stroke-dasharray="2 1" /><path d="M6 11.500h12" stroke="#fff" /></svg>
        <span class="ime">中</span>
        <svg viewBox="0 0 16 16"><rect x="0" y="1" width="15" height="15" rx="3" fill="#f4511e" /><path d="M12 4.500Q4 3 4 6t7 3-7 3.500" fill="none" stroke="#fff" stroke-width="2.200" /></svg>
      </div>
      <div class="clock">21:57<br />2017/10/23</div>
      <svg class="note" viewBox="0 0 18 18"><path d="M1.500 1.500h15v12h-5v3l-3-3h-7z" fill="none" stroke="#fff" stroke-width="1.300" /></svg>
      <i class="peek" />
    </div>

    <svg class="ring" viewBox="0 0 172 116"><ellipse cx="86" cy="58" rx="84" ry="56" fill="none" stroke="#f00" stroke-width="3" shape-rendering="crispEdges" /></svg>

    <div class="speed">
      <span class="ball">78%</span>
      <svg viewBox="0 0 8 10"><path d="M4 0l4 4H5v5H3V4H0z" fill="#e2412e" /></svg>
      <span class="rate">0.04K/s</span>
      <svg class="shield" viewBox="0 0 20 22"><path d="M1 5q5 0 8-3 4 3 8 3 1 12-8 16Q0 17 1 5z" fill="#2d7fe0" /><path d="M9 7v9M4.500 11.500h9" stroke="#fff" stroke-width="2" /><circle cx="15" cy="4" r="4" fill="#d83a34" /></svg>
    </div>
    <div class="ime-bar">
      <svg class="sogou" viewBox="0 0 28 28"><path d="M3 5q0-2 2-2L21 1q2 0 3 2l3 19q0 2-2 2L9 27q-3 0-3-2L1 7q0-2 2-2z" fill="#f15a24" /><path d="M21 7Q8 5 9 10.500t11 4-8 7q-3 0-4-1" fill="none" stroke="#fff" stroke-width="4" /></svg>
      <b>中</b>
      <svg viewBox="0 0 16 16"><circle cx="4" cy="5" r="2" fill="none" stroke="#2272c3" stroke-width="1.500" /><path d="M10 9h3v3q0 2-3 3 1-1 1-3h-1z" fill="#2272c3" /></svg>
      <svg viewBox="0 0 16 16"><rect x="5" y="0" width="6" height="10" rx="3" fill="#2272c3" /><path d="M2.500 6q0 6 5.500 6t5.500-6M8 12v4M5 15.500h6" fill="none" stroke="#2272c3" stroke-width="1.500" /></svg>
      <svg viewBox="0 0 16 16"><rect x="0" y="2" width="16" height="12" rx="1" fill="#2272c3" /><path d="M2 5h12M2 8h12" stroke="#fff" stroke-width="1.500" stroke-dasharray="2 1" /><path d="M4 11.500h8" stroke="#fff" stroke-width="1.500" /></svg>
      <svg viewBox="0 0 16 16"><circle cx="6" cy="4" r="3.500" fill="#a9b8cf" /><path d="M0 14q0-6 6-6t6 6z" fill="#a9b8cf" /><rect x="7" y="8" width="9" height="7" fill="#fff" stroke="#a9b8cf" /><path d="M10 10v3M13 10v3" stroke="#a9b8cf" /></svg>
      <svg viewBox="0 0 16 16"><path d="M5 1q3 2 6 0l5 3-2 4-2-1v8H4V7L2 8 0 4z" fill="#2272c3" /></svg>
      <svg viewBox="0 0 16 16"><path d="M15 3l-3 3-2-2 3-3q-4-1-5 1t-1 4l-6 6q0 3 3 3l6-6q6 0 5-6z" fill="#2272c3" /></svg>
    </div>
  </div>
</template>

<style>
html,
body {
  margin: 0;
  background: #f0f0f0;
}
</style>

<style scoped>
.app {
  position: relative;
  display: flex;
  flex-direction: column;
  height: 100vh;
  overflow: hidden;
  background: #f0f0f0;
  color: #000;
  font: 12px/16px 'Noto Sans', 'Noto Sans CJK SC', sans-serif;
}
.app :deep(button),
.app :deep(select),
.app :deep(input) {
  margin: 0;
  padding: 0;
  border: 0;
  background: none;
  color: inherit;
  font: inherit;
  white-space: nowrap;
  border-radius: 0;
}
.app :deep(select) {
  appearance: none;
  opacity: 1;
}
.app :deep(svg) {
  flex: none;
  display: block;
}
.i16 {
  width: 16px;
  height: 16px;
}
.tri {
  width: 6px;
  height: 3px;
}

/* title and menu */
.title {
  display: flex;
  align-items: center;
  height: 23px;
  background: #fff;
  padding: 0 2px;
}
.logo {
  width: 16px;
  height: 16px;
}
h1 {
  flex: 1;
  margin: 0 0 0 4px;
  font: 12px/16px Inter, 'Noto Sans CJK SC', sans-serif;
  white-space: nowrap;
}
.winbtns {
  display: flex;
}
.winbtns button {
  display: grid;
  place-items: center;
  width: 46px;
  height: 20px;
}
.winbtns svg {
  width: 12px;
  height: 12px;
}
.menu {
  display: flex;
  align-items: center;
  height: 30px;
  padding-left: 7px;
}
.menus {
  display: flex;
  gap: 11px;
  flex: 1;
}
.newchg {
  display: flex;
  align-items: center;
  gap: 4px;
  margin-left: 4px;
}
.help {
  margin-right: 40px;
  color: #2f6b06;
  text-decoration: none;
}
.account {
  display: flex;
  align-items: center;
  gap: 9px;
  height: 28px;
  width: 236px;
  padding-left: 4px;
  background: #f8f8f8;
}
.acc {
  display: flex;
  align-items: center;
  gap: 4px;
}
.acc .tri {
  margin-left: 4px;
}
.chev {
  margin: -12px 5px 0 auto;
}

/* tool strips */
.toolrow {
  display: flex;
  gap: 3px;
  height: 27px;
  padding-bottom: 1px;
}
.first {
  height: 28px;
  gap: 0;
  padding-bottom: 2px;
  padding-top: 1px;
}
.group {
  display: flex;
  align-items: center;
  border-radius: 3px;
  background: linear-gradient(#fbfbfb, #f1f1f1);
}
.file {
  flex: 0 0 150px;
}
.calc {
  flex: 0 0 549px;
  padding-left: 3px;
}
.view,
.fill {
  flex: 1;
}
.blank {
  width: 30px;
}
.app :deep(.t-btn) {
  display: flex;
  align-items: center;
  height: 23px;
  padding: 0 3px 0 4px;
  flex: none;
}
.app :deep(.t-btn.off) {
  color: #828282;
}
.app :deep(.t-btn.on) {
  background: #dcebf7;
  box-shadow: inset 0 0 0 1px #0a78d4;
}
.app :deep(.t-ico) {
  width: 16px;
  height: 16px;
}
.app :deep(.t-ico + .t-label) {
  margin-left: 4px;
}
.app :deep(.t-arrow) {
  display: grid;
  place-items: center;
}
.app :deep(.t-arrow.split) {
  width: 13px;
  padding-left: 3px;
  box-sizing: border-box;
}
.app :deep(.t-arrow.menu) {
  width: 9px;
}
.app :deep(.caret) {
  width: 6px;
  height: 3px;
}
.app :deep(.t-sep) {
  width: 6px;
  height: 16px;
  box-sizing: border-box;
  border-right: 1px solid #b4b4b4;
}
.app :deep(.t-handle),
.grab {
  flex: none;
  width: 3px;
  height: 16px;
  margin: 0 1px 0 3px;
  background: repeating-linear-gradient(#b4b4b4 0 2px, transparent 2px 4px);
  background-size: 2px 100%;
  background-repeat: no-repeat;
}
.app :deep(.t-space) {
  flex: 1;
}
.app :deep(.t-more) {
  align-self: flex-start;
  width: 12px;
  font-weight: 700;
  line-height: 12px;
}
.app :deep(.t-combo) {
  display: flex;
  width: 70px;
  height: 23px;
  margin-right: 2px;
  background: #fff;
}
.app :deep(.t-combo.small) {
  width: 59px;
}
.app :deep(.t-combo select) {
  flex: 1;
  min-width: 0;
  padding-left: 3px;
}
.app :deep(.t-combo.framed) {
  width: 56px;
  margin: 0;
  border: 1px solid #6f6f6f;
  box-sizing: border-box;
  background: #f6f6f6;
  color: #777;
}
.app :deep(.t-drop) {
  display: grid;
  place-items: center;
  width: 12px;
  background: #f5f5f5;
}

/* side panel */
.body {
  display: flex;
  flex: 1;
  min-height: 0;
  gap: 5px;
}
.side {
  display: flex;
  flex-direction: column;
  flex: 0 0 165px;
  font-family: 'Liberation Sans', 'Noto Sans CJK SC', sans-serif;
}
.sidehead {
  display: flex;
  align-items: center;
  gap: 6px;
  height: 15px;
  margin-bottom: 2px;
  padding-right: 3px;
  background: #0054e3;
  color: #fff;
}
.sidehead span {
  flex: 1;
}
.sidehead svg {
  width: 12px;
  height: 12px;
}
.side .tab {
  height: 22px;
  flex: none;
  border: 1px solid #9d9d9d;
  border-right-color: #808080;
  border-bottom-color: #808080;
  box-shadow: inset 1px 1px #fff;
}
.sidetools {
  height: 26px;
  margin: 1px 0 0 1px;
  padding-left: 6px;
  background: #f8f8f8;
}
.sidetools svg {
  width: 42px;
  height: 20px;
  margin-top: 4px;
}
.treebox {
  display: flex;
  flex-direction: column;
  flex: 1;
  min-height: 0;
  margin: 0 1px 1px 2px;
  border: 1px solid #828790;
  background: #fff;
}
.treemain {
  display: flex;
  flex: 1;
  min-height: 0;
}
.tree {
  flex: 1;
  overflow: hidden;
  padding-top: 1px;
}
.row {
  display: flex;
  align-items: center;
  height: 16px;
}
.parent .fold {
  width: 12px;
  height: 12px;
  margin: 0 5px 0 5px;
}
.parent span {
  margin-left: 5px;
}
.parent .i16 {
  margin-left: 1px;
}
.kids {
  margin-left: 12px;
  border-left: 1px dotted #808080;
}
.stem {
  align-self: stretch;
  width: 10px;
  margin-left: 18px;
  border-left: 1px dotted #808080;
  background: linear-gradient(90deg, #808080 50%, transparent 50%) 0 8px / 2px 1px repeat-x;
}
.last .stem {
  height: 9px;
  align-self: flex-start;
}
.name {
  padding: 0 1px 0 4px;
}
.sel {
  background: #d9d9d9;
}
kbd,
tt {
  font: 12px/16px 'Liberation Serif', serif;
}
.vbar {
  display: flex;
  flex-direction: column;
  align-items: center;
  width: 16px;
  background: #f0f0f0;
  padding: 4px 0;
}
.vbar svg,
.hbar svg {
  width: 12px;
  height: 12px;
}
.vbar path,
.hbar path {
  fill: none;
  stroke: #505050;
  stroke-width: 2;
}
.track {
  display: flex;
  flex-direction: column;
  flex: 1;
  width: 100%;
}
.before {
  flex: 129;
}
.thumb {
  flex: 206;
  background: #cdcdcd;
}
.after {
  flex: 99;
}
.hbar {
  display: flex;
  align-items: center;
  height: 17px;
  padding: 0 18px 0 3px;
  gap: 3px;
  background: #f0f0f0;
}
.hthumb {
  flex: 1;
  margin-right: 5px;
  height: 15px;
  background: #cdcdcd;
}

/* drawing area */
.work {
  display: flex;
  flex-direction: column;
  flex: 1;
  min-width: 0;
}
.canvas {
  position: relative;
  flex: 1;
  min-height: 0;
  margin-right: 1px;
  background: #000;
  overflow: hidden;
}
.drawing {
  width: 100%;
  height: 100%;
}
.cadtext text {
  fill: #d6d6d6;
  font: 14px 'Liberation Mono', monospace;
}
.cadtext .dim {
  font-size: 13px;
}
.cadtext .mark {
  font: 700 14px 'Liberation Mono', monospace;
  text-anchor: middle;
}
.axis {
  font: 13px 'Liberation Sans', sans-serif;
  text-anchor: middle;
}
.panel {
  position: absolute;
  left: 10px;
  top: 1px;
  display: flex;
  flex-direction: column;
  width: 166px;
  height: 178px;
  box-sizing: border-box;
  padding: 0 1px 1px;
  border: 1px solid #8a8a8a;
  border-width: 0 1px 1px 0;
  background: #fff;
}
.panel h2 {
  margin: 6px 7px 8px;
  font-size: 12px;
  font-weight: 400;
  line-height: 17px;
  color: #999;
}
.opts {
  display: flex;
  flex-direction: column;
  flex: 1;
  padding: 1px 0 0 3px;
  border: 1px solid #828790;
}
.opts label {
  display: flex;
  align-items: center;
  gap: 3px;
  height: 12px;
  line-height: 12px;
}
.opts input {
  appearance: none;
  width: 11px;
  height: 11px;
  border: 1px solid #8e8f8f;
  background: #fff;
}
.opts input:checked::after {
  content: '';
  display: block;
  width: 5px;
  height: 2px;
  margin: 2px 0 0 1px;
  border: 1px solid #333;
  border-width: 0 0 1px 1px;
  transform: rotate(-45deg);
}

/* snap strip */
.bottom {
  height: 28px;
  padding: 1px 0;
}
.bottom .group:last-child {
  color: #606060;
}
.shift {
  display: flex;
  align-items: center;
  width: 60px;
  height: 23px;
  background: #fff;
  color: #000;
}
.shift select {
  flex: 1;
  padding-left: 3px;
}
.shift .tri {
  margin-right: 4px;
}
.bar {
  width: 3px;
  height: 16px;
  border-left: 1px solid #b4b4b4;
  margin-left: 3px;
}
.num {
  display: flex;
  align-items: center;
  box-sizing: border-box;
  width: 58px;
  height: 23px;
  margin: 0 2px 0 4px;
  border: 1px solid #767676;
}
.num input {
  flex: 1;
  min-width: 0;
  text-align: right;
}
.num svg {
  width: 6px;
  height: 18px;
  margin: 0 4px 0 10px;
  fill: #555;
}
.num.wide {
  width: 68px;
  margin-left: 4px;
}
.unit + label {
  margin-left: 5px;
}
.rot {
  display: flex;
  align-items: center;
  gap: 8px;
  color: #000;
}
.app .rot input {
  appearance: none;
  width: 11px;
  height: 11px;
  border: 1px solid #8e8f8f;
}
.unit:last-child {
  padding-right: 4px;
}

/* status bar */
.status {
  display: flex;
  gap: 3px;
  height: 20px;
  margin-top: 1px;
  padding-top: 2px;
  background: #fcfcfc;
  font-family: 'Liberation Sans', 'Noto Sans CJK SC', sans-serif;
}
.status span {
  box-sizing: border-box;
  border: 1px solid #dadada;
  border-left-color: #c8c8c8;
  padding-left: 1px;
  line-height: 17px;
  background: linear-gradient(#fff, #f1f1f1);
}
.s1 {
  width: 147px;
}
.s2 {
  width: 78px;
}
.s3 {
  width: 97px;
}
.s4 {
  width: 47px;
}
.s5 {
  flex: 1;
}
.s6 {
  width: 70px;
}

/* taskbar */
.taskbar {
  display: flex;
  align-items: center;
  height: 40px;
  flex: none;
  background: #030c0f;
  color: #fff;
}
.taskbar .start {
  display: grid;
  place-items: center;
  width: 48px;
  height: 40px;
  background: #000;
}
.start svg {
  width: 16px;
  height: 16px;
}
.search {
  display: flex;
  align-items: center;
  width: 344px;
  height: 40px;
  box-sizing: border-box;
  padding: 0 14px 0 9px;
  background: #333;
}
.cortana {
  width: 15px;
  height: 15px;
  border: 3px solid #fff;
  border-radius: 50%;
}
.app .search input {
  flex: 1;
  margin-left: 6px;
  font-size: 14px;
}
.search input::placeholder {
  color: #9a9a9a;
  opacity: 1;
}
.search svg {
  width: 12px;
  height: 18px;
}
.apps {
  display: flex;
  flex: 1;
}
.apps button {
  display: grid;
  place-items: center;
  width: 48px;
  height: 40px;
  margin-right: 2px;
  box-sizing: border-box;
}
.apps svg {
  width: 24px;
  height: 24px;
}
.apps .run {
  margin-right: 1px;
  background: linear-gradient(#76b9ed, #76b9ed) center bottom / 40px 3px no-repeat;
}
.apps .active {
  background: linear-gradient(#76b9ed, #76b9ed) center bottom / 48px 3px no-repeat #333c40;
}
.cpu,
.clock {
  text-align: center;
  line-height: 18px;
}
.cpu {
  margin-right: 18px;
}
.tray {
  display: flex;
  align-items: center;
  gap: 8px;
}
.tray svg {
  width: 16px;
  height: 16px;
}
.tray .wide {
  width: 24px;
}
.ime {
  margin-right: 6px;
  font-size: 14px;
}
.clock {
  margin: 0 15px 0 14px;
}
.note {
  width: 18px;
  height: 18px;
}
.peek {
  width: 4px;
  height: 40px;
  margin-left: 19px;
  border-left: 1px solid #4a5053;
}

/* floating pieces */
.ring {
  position: absolute;
  left: 145px;
  top: 170px;
  width: 172px;
  height: 116px;
  pointer-events: none;
}
.speed {
  position: absolute;
  left: 914px;
  top: 10px;
  display: flex;
  gap: 4px;
  width: 124px;
  height: 38px;
  box-sizing: border-box;
  border: 1px solid #bbb;
  border-radius: 20px;
  background: #f4f4f4;
  box-shadow: 1px 2px 5px #888;
}
.ball {
  width: 44px;
  height: 44px;
  margin: -5px 4px 0 0;
  border: 1px solid #ccc;
  border-radius: 50%;
  background: linear-gradient(#278c50 0 35%, #3ec95a 36%, #39b54a);
  box-shadow: 0 1px 4px #555;
  color: #fff;
  font-size: 16px;
  line-height: 44px;
  text-align: center;
}
.speed svg {
  width: 8px;
  height: 10px;
  margin-top: 7px;
}
.rate {
  margin-top: 3px;
  font-size: 10px;
}
.speed .shield {
  position: absolute;
  right: 4px;
  top: 8px;
  width: 20px;
  height: 22px;
  margin: 0;
}
.ime-bar {
  position: absolute;
  left: 833px;
  top: 21px;
  display: flex;
  align-items: center;
  gap: 6px;
  width: 185px;
  height: 27px;
}
.ime-bar::before {
  content: '';
  position: absolute;
  inset: 3px 0 0 10px;
  border: 1px solid #c6d8ea;
  background: #fff;
}
.ime-bar > * {
  position: relative;
}
.ime-bar svg {
  width: 16px;
  height: 16px;
}
.ime-bar .sogou {
  width: 28px;
  height: 28px;
  margin-right: -2px;
}
.ime-bar b {
  color: #2272c3;
  font-size: 16px;
}
</style>
